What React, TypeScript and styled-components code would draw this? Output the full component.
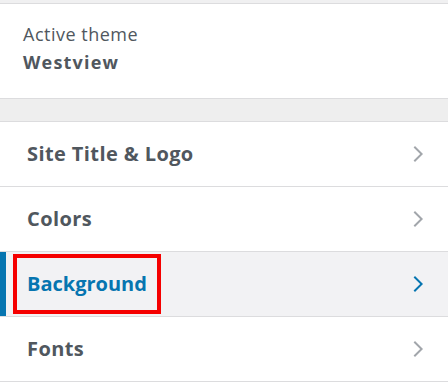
import React from 'react';
import styled, { createGlobalStyle } from 'styled-components';

const GlobalStyle = createGlobalStyle`
  body {
    margin: 0;
    background: #fff;
    font-family: "Open Sans", "Noto Sans", sans-serif;
  }
`;

const Page = styled.div`
  width: 448px;
  height: 385px;
  overflow: hidden;
  background: #fff;
`;

const TopStrip = styled.div`
  height: 3px;
  background: #f0f0f1;
  border-bottom: 1px solid #dcdcde;
`;

const ThemeInfo = styled.div`
  height: 95px;
  box-sizing: border-box;
  padding: 16px 23px 0;
  border-bottom: 1px solid #dcdcde;
  color: #50575e;
`;

const ThemeLabel = styled.div`
  font-size: 18px;
  line-height: 28px;
  letter-spacing: 0.5px;
`;

const ThemeName = styled.div`
  font-size: 18px;
  line-height: 28px;
  font-weight: 700;
  letter-spacing: 1.2px;
`;

const Gap = styled.div`
  height: 22px;
  background: #eeeeee;
  border-bottom: 1px solid #dcdcde;
`;

const Menu = styled.ul`
  list-style: none;
  margin: 0;
  padding: 0;
`;

interface ItemProps {
  $active?: boolean;
}

const Item = styled.li<ItemProps>`
  height: 64px;
  display: flex;
  align-items: center;
  justify-content: space-between;
  padding: 0 19px 0 27px;
  border-bottom: 1px solid #dcdcde;
  background: ${({ $active }) => ($active ? '#f2f2f4' : '#fff')};
  box-shadow: ${({ $active }) => ($active ? 'inset 6px 0 0 #0675b0' : 'none')};
  color: ${({ $active }) => ($active ? '#0675b0' : '#50575e')};
  cursor: pointer;
`;

const Title = styled.span<ItemProps>`
  font-size: 20px;
  font-weight: 700;
  line-height: 26px;
  letter-spacing: 0.4px;
  ${({ $active }) =>
    $active
      ? `
    letter-spacing: 0;
    padding: 13px 10px 13px 10px;
    margin: -13px -10px -13px -10px;
    outline: 4px solid #f50000;
  `
      : ''}
`;

const Chevron = styled.svg<ItemProps>`
  width: 24px;
  height: 24px;
  fill: ${({ $active }) => ($active ? '#0675b0' : '#a2a6ab')};
`;

const items = ['Site Title & Logo', 'Colors', 'Background', 'Fonts'];

export default function App() {
  return (
    <Page>
      <GlobalStyle />
      <TopStrip />
      <ThemeInfo>
        <ThemeLabel>Active theme</ThemeLabel>
        <ThemeName>Westview</ThemeName>
      </ThemeInfo>
      <Gap />
      <Menu>
        {items.map(item => {
          const active = item === 'Background';
          return (
            <Item key={item} $active={active}>
              <Title $active={active}>{item}</Title>
              <Chevron $active={active} viewBox="0 0 24 24">
                <path d="M10 20l8-8-8-8-1.414 1.414L15.172 12l-6.586 6.586z" />
              </Chevron>
            </Item>
          );
        })}
      </Menu>
    </Page>
  );
}
